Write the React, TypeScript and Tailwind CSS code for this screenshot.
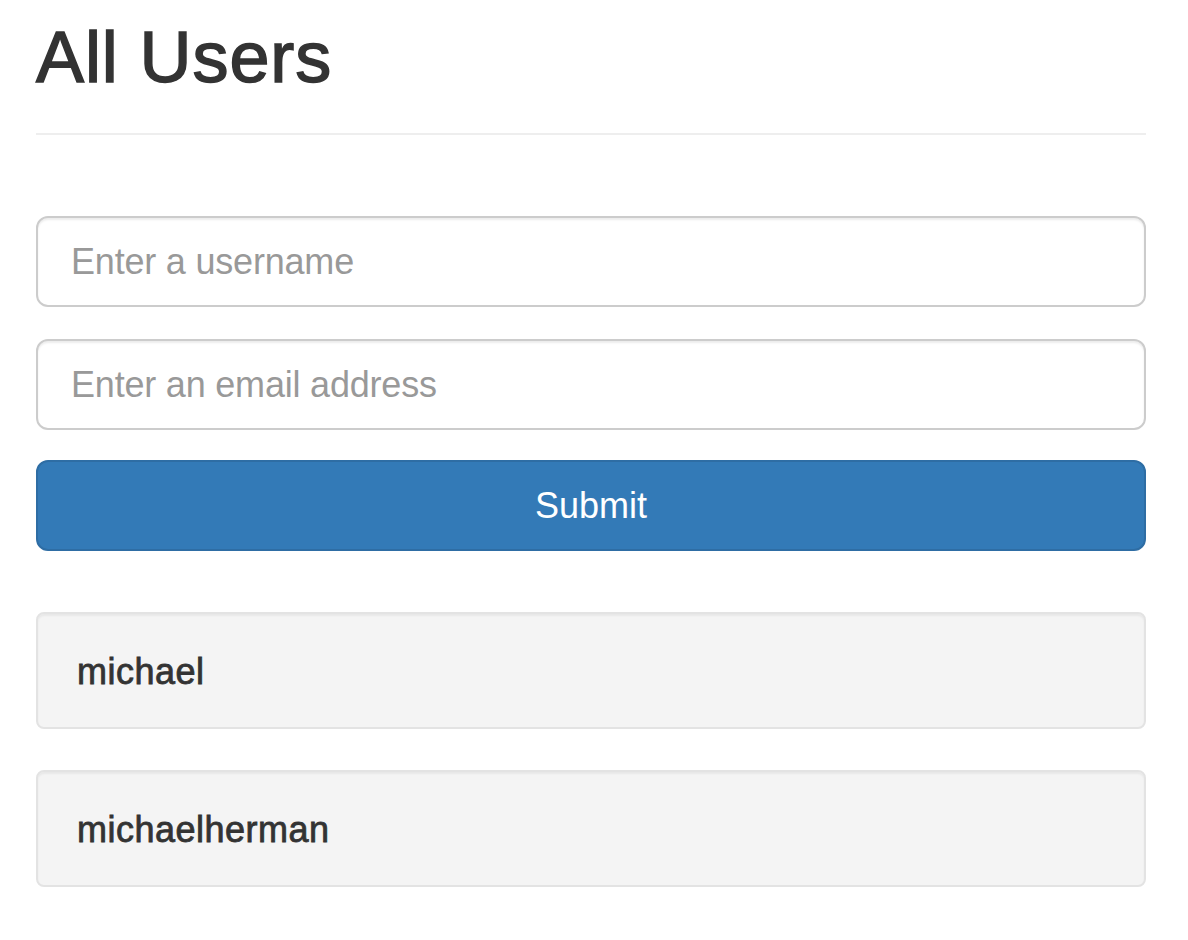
import React, { useState } from "react";

interface User {
  id: number;
  username: string;
}

const users: User[] = [
  { id: 1, username: "michael" },
  { id: 2, username: "michaelherman" },
];

const App: React.FC = () => {
  const [username, setUsername] = useState("");
  const [email, setEmail] = useState("");

  const handleSubmit = (e: React.FormEvent) => {
    e.preventDefault();
  };

  return (
    <div className="min-h-screen bg-white font-['Liberation_Sans',Arial,sans-serif] text-[#333]">
      <div className="mx-[36px] w-[1110px] pt-[17px]">
        <h1 className="text-[72px] leading-[80px] font-normal tracking-[0.9px] [-webkit-text-stroke:1.5px_#333]">
          All Users
        </h1>
        <hr className="mt-[36px] border-0 border-t-2 border-[#eee]" />

        <form onSubmit={handleSubmit} className="mt-[81px] flex flex-col">
          <input
            type="text"
            value={username}
            onChange={(e) => setUsername(e.target.value)}
            placeholder="Enter a username"
            className="h-[91px] w-full rounded-[12px] border-2 border-[#ccc] bg-white px-[33px] text-[36px] tracking-[-0.2px] text-[#555] placeholder:text-[#999] shadow-[inset_0_2px_2px_rgba(0,0,0,0.075)] outline-none"
          />
          <input
            type="email"
            value={email}
            onChange={(e) => setEmail(e.target.value)}
            placeholder="Enter an email address"
            className="mt-[32px] h-[91px] w-full rounded-[12px] border-2 border-[#ccc] bg-white px-[33px] text-[36px] tracking-[-0.2px] text-[#555] placeholder:text-[#999] shadow-[inset_0_2px_2px_rgba(0,0,0,0.075)] outline-none"
          />
          <button
            type="submit"
            className="mt-[30px] h-[91px] w-full rounded-[12px] border-2 border-[#2e6da4] bg-[#337ab7] text-[36px] text-white"
          >
            Submit
          </button>
        </form>

        <div className="mt-[61px] flex flex-col gap-[41px]">
          {users.map((user) => (
            <div
              key={user.id}
              className="box-border h-[117px] rounded-[8px] border-2 border-[#e3e3e3] bg-[#f4f4f4] pl-[39px] pt-[38px] shadow-[inset_0_2px_2px_rgba(0,0,0,0.05)]"
            >
              <h4 className="text-[36px] leading-[40px] font-normal tracking-[0.5px] [-webkit-text-stroke:0.8px_#333]">
                {user.username}
              </h4>
            </div>
          ))}
        </div>
      </div>
    </div>
  );
};

export default App;
